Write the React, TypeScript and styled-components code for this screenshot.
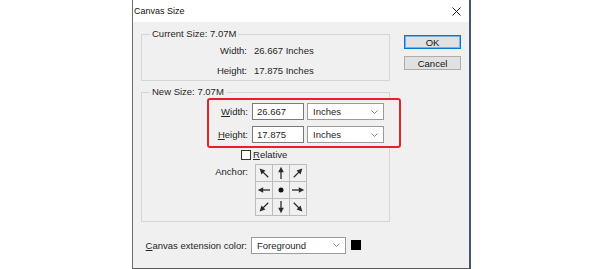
import React from 'react';
import styled, { createGlobalStyle } from 'styled-components';

const GlobalStyle = createGlobalStyle`
  html, body {
    margin: 0;
    padding: 0;
    background: #ffffff;
  }
  body {
    font-family: "Liberation Sans", Arial, sans-serif;
    font-size: 9.5px;
    color: #262626;
  }
`;

const Page = styled.div`
  width: 600px;
  height: 269px;
  box-sizing: border-box;
  padding-left: 132px;
  display: flex;
  overflow: hidden;
`;

const Dialog = styled.div`
  width: 339px;
  height: 269px;
  box-sizing: border-box;
  border-left: 1px solid #6e6e6e;
  border-right: 2px solid #46556b;
  border-bottom: 1px solid #5a5a5a;
  background: #f0f0f0;
  display: flex;
  flex-direction: column;
`;

const TitleBar = styled.div`
  height: 22px;
  flex-shrink: 0;
  background: #ffffff;
  display: flex;
  align-items: center;
  justify-content: space-between;
  padding: 0 8px 0 1px;
  font-size: 9px;
  color: #111;
`;

const Body = styled.div`
  flex: 1;
  display: flex;
  padding: 12px 0 0 8px;
`;

const LeftCol = styled.div`
  width: 249px;
  display: flex;
  flex-direction: column;
`;

const Group = styled.div<{ $h: number; $mt?: number }>`
  position: relative;
  box-sizing: border-box;
  height: ${(p) => p.$h}px;
  margin-top: ${(p) => p.$mt ?? 0}px;
  border: 1px solid #d5d5d5;
  padding-top: 5px;
  display: flex;
  flex-direction: column;
`;

const Legend = styled.span`
  position: absolute;
  top: -7px;
  left: 8px;
  padding: 0 2px;
  line-height: 12px;
  background: #f0f0f0;
`;

const InfoRow = styled.div`
  height: 20px;
  display: flex;
  align-items: center;
`;

const RightLabel = styled.span<{ $w: number; $gap: number }>`
  width: ${(p) => p.$w}px;
  margin-right: ${(p) => p.$gap}px;
  text-align: right;
  flex-shrink: 0;
  white-space: nowrap;
`;

const Highlight = styled.div`
  position: relative;
  z-index: 1;
  margin-left: 65px;
  width: 194px;
  box-sizing: border-box;
  border: 2px solid #e3222b;
  border-radius: 3px;
  padding: 3px 14px 3px 0;
  background: #f0f0f0;
  display: flex;
  flex-direction: column;
  gap: 6px;
`;

const FieldRow = styled.div`
  height: 17px;
  display: flex;
  align-items: center;
`;

const TextBox = styled.div`
  width: 52px;
  height: 17px;
  box-sizing: border-box;
  border: 1px solid #7a7a7a;
  background: #ffffff;
  padding-left: 4px;
  display: flex;
  align-items: center;
`;

const Select = styled.div<{ $w: number; $ml: number }>`
  width: ${(p) => p.$w}px;
  margin-left: ${(p) => p.$ml}px;
  height: 17px;
  box-sizing: border-box;
  border: 1px solid #9a9a9a;
  background: #ffffff;
  padding: 0 5px 0 5px;
  display: flex;
  align-items: center;
  justify-content: space-between;
`;

const CheckRow = styled.div`
  margin: 1px 0 0 99px;
  height: 11px;
  display: flex;
  align-items: center;
`;

const CheckBox = styled.span`
  width: 10px;
  height: 10px;
  box-sizing: border-box;
  border: 1px solid #333;
  background: #ffffff;
  margin-right: 2px;
`;

const AnchorRow = styled.div`
  margin-top: 4px;
  display: flex;
  align-items: flex-start;
  line-height: 16px;
`;

const AnchorGrid = styled.div`
  display: grid;
  grid-template-columns: repeat(3, 16px);
  grid-auto-rows: 16px;
  gap: 1px;
  padding: 1px;
  background: #bcbcbc;
`;

const AnchorCell = styled.div`
  background: #f0f0f0;
  display: flex;
  align-items: center;
  justify-content: center;
`;

const ColorRow = styled.div`
  margin-top: 15px;
  height: 16px;
  display: flex;
  align-items: center;
`;

const Swatch = styled.span`
  width: 10px;
  height: 10px;
  margin-left: 5px;
  background: #000;
`;

const RightCol = styled.div`
  margin-left: 14px;
  padding-top: 1px;
  display: flex;
  flex-direction: column;
  gap: 7px;
`;

const Button = styled.div<{ $primary?: boolean }>`
  width: 57px;
  height: 14px;
  box-sizing: border-box;
  background: #e1e1e1;
  border: 1px solid ${(p) => (p.$primary ? '#0078d7' : '#adadad')};
  box-shadow: ${(p) => (p.$primary ? 'inset 0 0 0 1px rgba(0,120,215,0.45)' : 'none')};
  display: flex;
  align-items: center;
  justify-content: center;
  color: #111;
`;

const Chevron = () => (
  <svg width="7" height="4" viewBox="0 0 7 4">
    <path d="M0.5 0.5 L3.5 3.5 L6.5 0.5" fill="none" stroke="#7a7a7a" strokeWidth="0.9" />
  </svg>
);

const CloseIcon = () => (
  <svg width="9" height="9" viewBox="0 0 9 9">
    <path d="M0.5 0.5 L8.5 8.5 M8.5 0.5 L0.5 8.5" stroke="#222" strokeWidth="1" />
  </svg>
);

const Arrow = ({ angle }: { angle: number }) => (
  <svg width="14" height="14" viewBox="0 0 14 14">
    <g transform={`rotate(${angle} 7 7)`}>
      <line x1="7" y1="13" x2="7" y2="5" stroke="#2b2b2b" strokeWidth="1.3" />
      <polygon points="7,0.8 4.2,6.2 9.8,6.2" fill="#2b2b2b" />
    </g>
  </svg>
);

const Dot = () => (
  <svg width="6" height="6" viewBox="0 0 6 6">
    <circle cx="3" cy="3" r="2.5" fill="#111" />
  </svg>
);

// null is the centre cell (dot), the rest are arrow angles
const anchors: (number | null)[] = [-45, 0, 45, -90, null, 90, -135, 180, 135];

export default function App() {
  return (
    <>
      <GlobalStyle />
      <Page>
        <Dialog>
          <TitleBar>
            <span>Canvas Size</span>
            <CloseIcon />
          </TitleBar>
          <Body>
            <LeftCol>
              <Group $h={47}>
                <Legend>Current Size: 7.07M</Legend>
                <InfoRow>
                  <RightLabel $w={105} $gap={7}>Width:</RightLabel>
                  <span>26.667 Inches</span>
                </InfoRow>
                <InfoRow>
                  <RightLabel $w={105} $gap={7}>Height:</RightLabel>
                  <span>17.875 Inches</span>
                </InfoRow>
              </Group>

              <Group $h={130} $mt={11}>
                <Legend>New Size: 7.07M</Legend>
                <Highlight>
                  <FieldRow>
                    <RightLabel $w={39} $gap={4}>
                      <u>W</u>idth:
                    </RightLabel>
                    <TextBox>26.667</TextBox>
                    <Select $w={77} $ml={3}>
                      <span>Inches</span>
                      <Chevron />
                    </Select>
                  </FieldRow>
                  <FieldRow>
                    <RightLabel $w={39} $gap={4}>
                      <u>H</u>eight:
                    </RightLabel>
                    <TextBox>17.875</TextBox>
                    <Select $w={77} $ml={3}>
                      <span>Inches</span>
                      <Chevron />
                    </Select>
                  </FieldRow>
                </Highlight>
                <CheckRow>
                  <CheckBox />
                  <span>
                    <u>R</u>elative
                  </span>
                </CheckRow>
                <AnchorRow>
                  <RightLabel $w={106} $gap={7}>Anchor:</RightLabel>
                  <AnchorGrid>
                    {anchors.map((a, i) => (
                      <AnchorCell key={i}>{a === null ? <Dot /> : <Arrow angle={a} />}</AnchorCell>
                    ))}
                  </AnchorGrid>
                </AnchorRow>
              </Group>

              <ColorRow>
                <RightLabel $w={106} $gap={4}>
                  <u>C</u>anvas extension color:
                </RightLabel>
                <Select $w={95} $ml={0}>
                  <span>Foreground</span>
                  <Chevron />
                </Select>
                <Swatch />
              </ColorRow>
            </LeftCol>
            <RightCol>
              <Button $primary>OK</Button>
              <Button>Cancel</Button>
            </RightCol>
          </Body>
        </Dialog>
      </Page>
    </>
  );
}
